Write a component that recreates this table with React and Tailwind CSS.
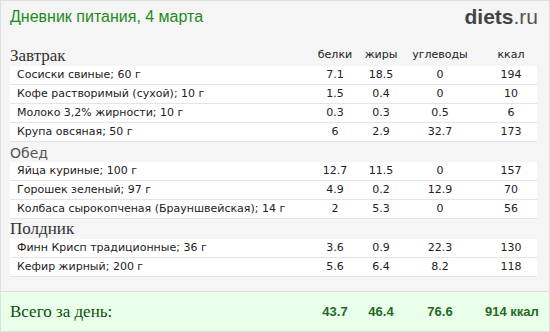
import React from "react";

const groups = [
  {
    name: "Завтрак",
    serif: true,
    showHeader: true,
    rows: [
      ["Сосиски свиные; 60 г", "7.1", "18.5", "0", "194"],
      ["Кофе растворимый (сухой); 10 г", "1.5", "0.4", "0", "10"],
      ["Молоко 3,2% жирности; 10 г", "0.3", "0.3", "0.5", "6"],
      ["Крупа овсяная; 50 г", "6", "2.9", "32.7", "173"],
    ],
  },
  {
    name: "Обед",
    serif: false,
    rows: [
      ["Яйца куриные; 100 г", "12.7", "11.5", "0", "157"],
      ["Горошек зеленый; 97 г", "4.9", "0.2", "12.9", "70"],
      ["Колбаса сырокопченая (Брауншвейская); 14 г", "2", "5.3", "0", "56"],
    ],
  },
  {
    name: "Полдник",
    serif: true,
    rows: [
      ["Финн Крисп традиционные; 36 г", "3.6", "0.9", "22.3", "130"],
      ["Кефир жирный; 200 г", "5.6", "6.4", "8.2", "118"],
    ],
  },
];

function Cols({ a, b, c, d, cls }) {
  return (
    <>
      <div className={`w-[46px] text-center whitespace-nowrap ${cls}`}>{a}</div>
      <div className={`w-[46px] text-center whitespace-nowrap ${cls}`}>{b}</div>
      <div className={`w-[72px] text-center whitespace-nowrap ${cls}`}>{c}</div>
      <div className={`w-[61px] pl-[9px] text-center whitespace-nowrap ${cls}`}>{d}</div>
    </>
  );
}

export default function App() {
  return (
    <div className="w-[550px] h-[332px] bg-[#f5f5f5] border border-[#dedede] flex flex-col overflow-hidden">
      <div className="flex items-center justify-between h-[31px] pl-[9px] pr-[11px]">
        <div className="text-[16px] text-[#1d8a1d] font-['Liberation_Sans',sans-serif] leading-none">
          Дневник питания, 4 марта
        </div>
        <div className="text-[21px] text-[#444] font-['Liberation_Sans',sans-serif] leading-none">
          <span className="font-bold">diets</span>
          <span className="text-[#555]">.ru</span>
        </div>
      </div>
      <div className="flex flex-col pl-[9px] pr-[12px] pt-[14px] font-['DejaVu_Sans',sans-serif] text-[11px] text-[#222]">
        {groups.map((g) => (
          <div key={g.name} className="flex flex-col">
            <div className="flex items-end h-[20px]">
              <div
                className={
                  g.serif
                    ? "flex-1 font-['Liberation_Serif',serif] text-[17px] text-[#333] leading-none pb-[2px]"
                    : "flex-1 font-['DejaVu_Sans',sans-serif] text-[14px] text-[#555] leading-none pb-[2px]"
                }
              >
                {g.name}
              </div>
              {g.showHeader && (
                <Cols a="белки" b="жиры" c="углеводы" d="ккал" cls="pb-[3px] text-[#222]" />
              )}
            </div>
            {g.rows.map((r) => (
              <div
                key={r[0]}
                className="flex items-center h-[19px] bg-white border-b border-[#e4e4e4]"
              >
                <div className="flex-1 pl-[7px] whitespace-nowrap">{r[0]}</div>
                <Cols a={r[1]} b={r[2]} c={r[3]} d={r[4]} cls="" />
              </div>
            ))}
          </div>
        ))}
      </div>
      <div className="flex-1" />
      <div className="h-[40px] bg-[#eaffea] border-t border-[#dedede] flex items-center pl-[9px] pr-[12px]">
        <div className="flex-1 font-['Liberation_Serif',serif] text-[17px] text-[#0c4f0c]">
          Всего за день:
        </div>
        <Cols
          a="43.7"
          b="46.4"
          c="76.6"
          d="914 ккал"
          cls="font-['Liberation_Sans',sans-serif] font-bold text-[13px] text-[#1f6a1f]"
        />
      </div>
    </div>
  );
}
